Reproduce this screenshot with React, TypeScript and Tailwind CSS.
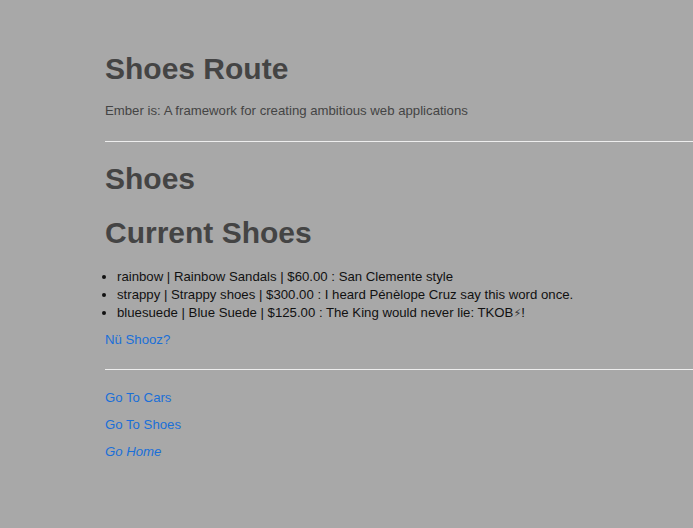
export default function App() {
  const shoes = [
    'rainbow | Rainbow Sandals | $60.00 : San Clemente style',
    'strappy | Strappy shoes | $300.00 : I heard Pénèlope Cruz say this word once.',
  ]

  return (
    <div className="min-h-[528px] bg-[#a8a8a8] pl-[105px] pt-[51px] font-['Liberation_Sans',Arial,sans-serif] text-[13.2px] leading-[18px] text-[#444]">
      <h1 className="text-[30px] font-bold leading-[36px] text-[#444]">Shoes Route</h1>
      <p className="mt-[15px]">Ember is: A framework for creating ambitious web applications</p>
      <hr className="mt-[21px] border-0 border-t border-[#eeeeee]" />

      <h2 className="mt-[19px] text-[30px] font-bold leading-[36px] text-[#444]">Shoes</h2>
      <h2 className="mt-[18px] text-[30px] font-bold leading-[36px] text-[#444]">Current Shoes</h2>
      <ul className="mt-[17px] list-disc pl-[12px] text-[#111]">
        {shoes.map((s) => (
          <li key={s}>{s}</li>
        ))}
        <li>
          bluesuede | Blue Suede | $125.00 : The King would never lie: TKOB
          <span className="font-['DejaVu_Sans',sans-serif] text-[11px] text-[#333]">{'\u26A1\uFE0E'}</span>!
        </li>
      </ul>
      <a className="mt-[8px] block text-[#1a6fd8]" href="#">Nü Shooz?</a>
      <hr className="mt-[20px] border-0 border-t border-[#eeeeee]" />

      <a className="mt-[19px] block text-[#1a6fd8]" href="#">Go To Cars</a>
      <a className="mt-[9px] block text-[#1a6fd8]" href="#">Go To Shoes</a>
      <a className="mt-[9px] block italic text-[#1a6fd8]" href="#">Go Home</a>
    </div>
  )
}
